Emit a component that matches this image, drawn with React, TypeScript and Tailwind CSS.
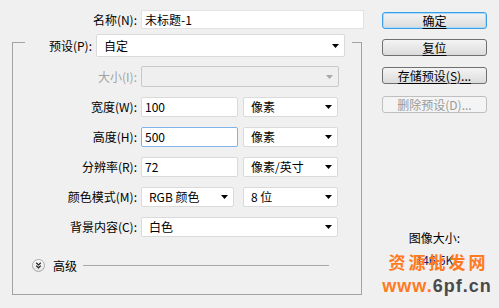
import React from 'react';

const Arrow = ({ disabled }: { disabled?: boolean }) => (
  <svg width="7" height="4" viewBox="0 0 7 4" className="absolute right-[5px] top-1/2 -translate-y-1/2">
    <path d="M0 0H7L3.5 4Z" fill={disabled ? '#a8a8a8' : '#000'} />
  </svg>
);

const Select = ({ text, w, h = 'h-[20px]', disabled }: { text?: string; w: string; h?: string; disabled?: boolean }) => (
  <div className={`relative ${w} ${h} border rounded-[2px] flex items-center pl-[7px] ${disabled ? 'bg-[#efefef] border-[#c9c9c9]' : 'bg-white border-[#dadada]'}`}>
    <span className="leading-none">{text}</span>
    <Arrow disabled={disabled} />
  </div>
);

const Input = ({ value, w, focused }: { value: string; w: string; focused?: boolean }) => (
  <div className={`${w} h-[20px] bg-white border rounded-[2px] flex items-center pl-[3px] ${focused ? 'border-[#7eb4ea]' : 'border-[#dadada]'}`}>
    <span className="leading-none">{value}</span>
  </div>
);

const Row = ({ label, children, mt = 'mt-[10px]', disabled }: { label: string; children: React.ReactNode; mt?: string; disabled?: boolean }) => (
  <div className={`flex items-center ${mt}`}>
    <span className={`w-[124px] text-right ${disabled ? 'text-[#a3a3a3]' : ''}`}>{label}</span>
    <div className="ml-[4px] flex items-center">{children}</div>
  </div>
);

const Button = ({ label, primary, disabled, mt }: { label: string; primary?: boolean; disabled?: boolean; mt?: string }) => (
  <div
    className={`${mt ?? ''} w-[105px] h-[17px] rounded-[3px] border flex items-center justify-center ${
      disabled
        ? 'border-[#bfbfbf] bg-[#f4f4f4] text-[#9a9a9a]'
        : primary
        ? 'border-[#3c9ee6] bg-gradient-to-b from-[#f4f4f4] to-[#dcdcdc] shadow-[inset_0_0_0_1px_#a9dcf7]'
        : 'border-[#707070] bg-gradient-to-b from-[#f4f4f4] to-[#dcdcdc]'
    }`}
  >
    <span className={`leading-none ${disabled ? '' : 'underline underline-offset-[2px]'}`}>{label}</span>
  </div>
);

export default function App() {
  return (
    <div className="w-[499px] h-[308px] bg-[#f0f0f0] flex text-[12px] text-black font-['Noto_Sans_CJK_SC',sans-serif] relative overflow-hidden">
      <div className="w-[382px] flex flex-col">
        <div className="mt-[10px] flex items-center">
          <span className="w-[137px] text-right">名称(N):</span>
          <div className="ml-[4px] w-[223px] h-[19px] bg-white border border-[#e2e2e2] flex items-center pl-[3px]">
            <span className="leading-none">未标题-1</span>
          </div>
        </div>

        <div className="mt-[13px] ml-[12px] w-[350px] h-[253px] border border-[#a3a3a3] flex flex-col">
          <div className="-mt-[9px] ml-[12px] w-[327px] bg-[#f0f0f0] flex items-center">
            <span className="w-[67px] text-right">预设(P):</span>
            <div className="ml-[4px]">
              <Select text="自定" w="w-[249px]" h="h-[23px]" />
            </div>
          </div>

          <Row label="大小(I):" mt="mt-[9px]" disabled>
            <Select w="w-[198px]" h="h-[21px]" disabled />
          </Row>
          <Row label="宽度(W):">
            <Input value="100" w="w-[97px]" />
            <div className="ml-[5px]"><Select text="像素" w="w-[95px]" /></div>
          </Row>
          <Row label="高度(H):">
            <Input value="500" w="w-[97px]" focused />
            <div className="ml-[5px]"><Select text="像素" w="w-[95px]" /></div>
          </Row>
          <Row label="分辨率(R):">
            <Input value="72" w="w-[97px]" />
            <div className="ml-[5px]"><Select text="像素/英寸" w="w-[95px]" /></div>
          </Row>
          <Row label="颜色模式(M):">
            <Select text="RGB 颜色" w="w-[93px]" />
            <div className="ml-[9px]"><Select text="8 位" w="w-[95px]" /></div>
          </Row>
          <Row label="背景内容(C):">
            <Select text="白色" w="w-[197px]" />
          </Row>

          <div className="mt-[22px] ml-[19px] flex items-center">
            <svg width="13" height="13" viewBox="0 0 13 13">
              <defs>
                <linearGradient id="adv" x1="0" y1="0" x2="0" y2="1">
                  <stop offset="0" stopColor="#ffffff" />
                  <stop offset="1" stopColor="#e2e2e2" />
                </linearGradient>
              </defs>
              <circle cx="6.5" cy="6.5" r="6" fill="url(#adv)" stroke="#a8a8a8" />
              <path d="M4.2 3.8L6.5 6L8.8 3.8M4.2 6.6L6.5 8.8L8.8 6.6" fill="none" stroke="#222" strokeWidth="1.2" />
            </svg>
            <span className="ml-[8px] leading-none">高级</span>
            <div className="ml-[6px] w-[246px] h-px bg-[#a8a8a8]" />
          </div>
        </div>
      </div>

      <div className="w-[105px] flex flex-col pt-[12px]">
        <Button label="确定" primary />
        <Button label="复位" mt="mt-[10px]" />
        <Button label="存储预设(S)..." mt="mt-[11px]" />
        <Button label="删除预设(D)..." disabled mt="mt-[12px]" />
        <div className="mt-[118px] text-center leading-[14px]">图像大小:</div>
        <div className="mt-[8px] text-center leading-[14px] text-[#1a1a60]">146.5K</div>
      </div>

      <div className="absolute left-[384px] top-[252px] w-[106px] flex flex-col items-center pointer-events-none whitespace-nowrap">
        <span className="text-[17px] leading-[20px] font-bold text-[#ff7a1f] tracking-[3px] pl-[3px]">资源批发网</span>
        <span className="mt-[5px] text-[18px] leading-[18px] font-bold tracking-[1px] font-['Liberation_Sans',sans-serif]">
          <span className="text-[#ff7a1f]">www.</span>
          <span className="text-[#4a4a4a]">6pf.cn</span>
        </span>
      </div>
    </div>
  );
}
